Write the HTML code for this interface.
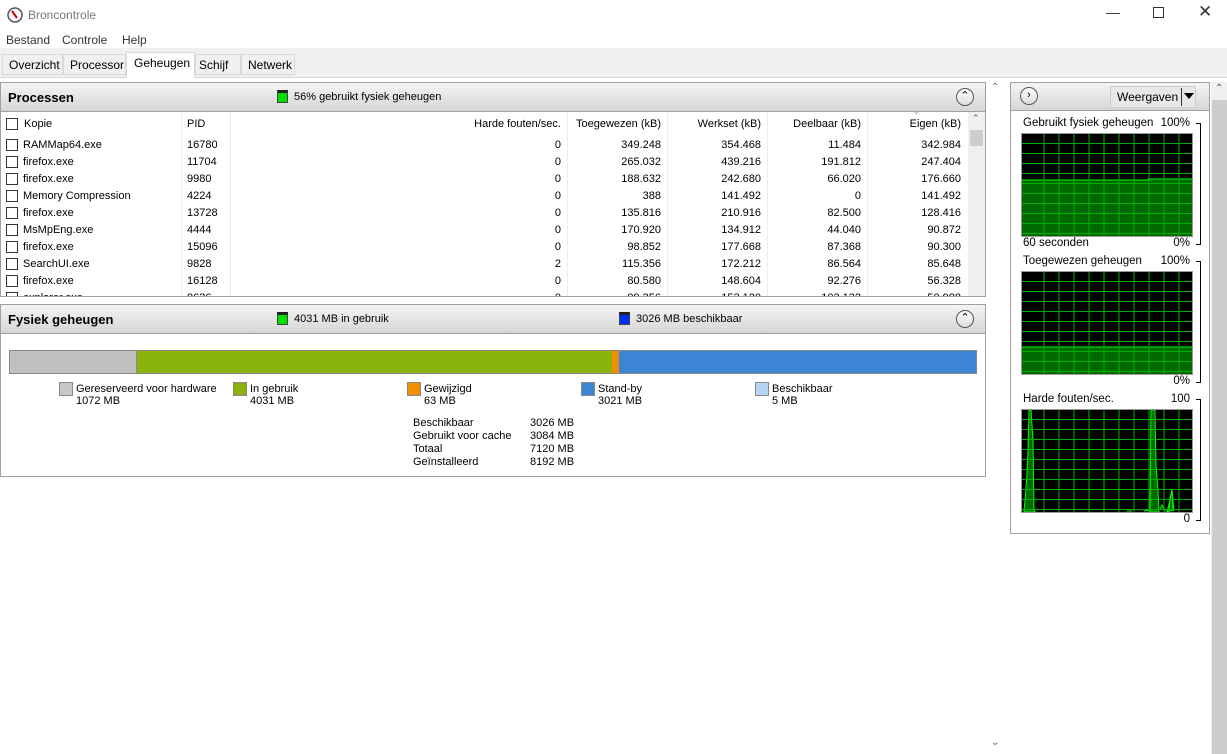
<!DOCTYPE html>
<html><head><meta charset="utf-8"><style>
*{margin:0;padding:0;box-sizing:border-box}
body{width:1227px;height:754px;background:#fff;font-family:"Liberation Sans",sans-serif;font-size:11px;color:#000;position:relative;overflow:hidden}
.a{position:absolute;white-space:nowrap}
.hdr{position:absolute;background:linear-gradient(#f4f4f4,#d6d6d6);border:1px solid #a0a0a0;}
.hdr b{position:absolute;left:7px;font-size:13px}
.cb{position:absolute;width:12px;height:12px;border:1px solid #333;background:#fff}
.r{text-align:right}
.col{position:absolute;top:112px;height:184px;border-left:1px solid #e8eef6}
.circ{position:absolute;width:18px;height:18px;border:1px solid #555;border-radius:50%;background:linear-gradient(#fff,#ddd);font-size:11px;text-align:center;line-height:15px}
.sw{position:absolute;width:14px;height:14px;border:1px solid #888}
</style></head><body>
<svg class="a" style="left:7px;top:7px" width="16" height="16"><circle cx="8" cy="8" r="7" fill="#fff" stroke="#555" stroke-width="1.5"/><path d="M5 4 L10 11" stroke="#c00" stroke-width="2"/></svg>
<div class="a" style="left:28px;top:8px;font-size:12px;color:#777">Broncontrole</div>
<div class="a" style="left:1106px;top:4px;font-size:14px;color:#333">&#8212;</div>
<div class="a" style="left:1153px;top:7px;width:11px;height:11px;border:1px solid #333"></div>
<div class="a" style="left:1198px;top:2px;font-size:17px;color:#333">&#10005;</div>
<div class="a" style="left:6px;top:33px;font-size:12px;color:#333">Bestand</div>
<div class="a" style="left:62px;top:33px;font-size:12px;color:#333">Controle</div>
<div class="a" style="left:122px;top:33px;font-size:12px;color:#333">Help</div>
<div class="a" style="left:0;top:48px;width:1227px;height:30px;background:#f0f0f0;border-bottom:1px solid #d9d9d9"></div>
<div class="a" style="left:2px;top:54px;width:61px;height:21px;border:1px solid #d9d9d9;font-size:12px;padding:3px 0 0 6px">Overzicht</div>
<div class="a" style="left:63px;top:54px;width:63px;height:21px;border:1px solid #d9d9d9;font-size:12px;padding:3px 0 0 6px">Processor</div>
<div class="a" style="left:126px;top:52px;width:69px;height:26px;border:1px solid #d9d9d9;border-bottom:none;background:#fff;font-size:12px;padding:3px 0 0 7px">Geheugen</div>
<div class="a" style="left:195px;top:54px;width:46px;height:21px;border:1px solid #d9d9d9;font-size:12px;padding:3px 0 0 3px">Schijf</div>
<div class="a" style="left:241px;top:54px;width:54px;height:21px;border:1px solid #d9d9d9;font-size:12px;padding:3px 0 0 6px">Netwerk</div>
<div class="a" style="left:0;top:82px;width:986px;height:215px;border:1px solid #a0a0a0"></div>
<div class="hdr" style="left:0;top:82px;width:986px;height:30px"><b style="top:7px">Processen</b></div>
<div class="a" style="left:277px;top:90px;width:11px;height:13px;background:#00e000;border:1px solid #444;border-top:3px solid #222"></div>
<div class="a" style="left:294px;top:91px">56% gebruikt fysiek geheugen</div>
<div class="circ" style="left:956px;top:88px">&#8963;</div>
<div class="col" style="left:181px"></div><div class="col" style="left:230px"></div><div class="col" style="left:567px"></div><div class="col" style="left:667px"></div><div class="col" style="left:767px"></div><div class="col" style="left:867px"></div>
<div class="cb" style="left:6px;top:118px"></div><div class="a" style="left:24px;top:118px">Kopie</div>
<div class="a" style="left:187px;top:118px">PID</div>
<div class="a r" style="left:230px;width:331px;top:118px">Harde fouten/sec.</div>
<div class="a r" style="left:567px;width:94px;top:118px">Toegewezen (kB)</div>
<div class="a r" style="left:667px;width:94px;top:118px">Werkset (kB)</div>
<div class="a r" style="left:767px;width:94px;top:118px">Deelbaar (kB)</div>
<div class="a r" style="left:867px;width:94px;top:118px">Eigen (kB)</div>
<div class="a" style="left:913px;top:107px;font-size:8px;color:#999">&#8964;</div>
<div class="a" style="left:968px;top:112px;width:17px;height:184px;background:#f0f0f0"></div>
<div class="a" style="left:970px;top:130px;width:13px;height:16px;background:#cdcdcd"></div>
<div class="a" style="left:972px;top:113px;font-size:9px;color:#555">&#8963;</div>
<div id="rows" class="a" style="left:0;top:138px;width:968px;height:158px;overflow:hidden"></div>
<div class="a" style="left:0;top:304px;width:986px;height:173px;border:1px solid #a0a0a0"></div>
<div class="hdr" style="left:0;top:304px;width:986px;height:30px"><b style="top:7px">Fysiek geheugen</b></div>
<div class="a" style="left:277px;top:312px;width:11px;height:13px;background:#00e000;border:1px solid #444;border-top:3px solid #222"></div>
<div class="a" style="left:294px;top:313px">4031 MB in gebruik</div>
<div class="a" style="left:619px;top:312px;width:11px;height:13px;background:#0030ff;border:1px solid #444;border-top:3px solid #222"></div>
<div class="a" style="left:636px;top:313px">3026 MB beschikbaar</div>
<div class="circ" style="left:956px;top:310px">&#8963;</div>
<div class="a" style="left:9px;top:350px;width:968px;height:24px;border:1px solid #888;display:flex">
<div style="width:127px;background:#c0c0c0;border-right:1px solid #888"></div>
<div style="width:475px;background:#8ab40c"></div>
<div style="width:7px;background:#f09000"></div>
<div style="flex:1;background:#3c84d4"></div></div>
<div class="sw" style="left:59px;top:382px;background:#c8c8c8"></div><div class="a" style="left:76px;top:383px">Gereserveerd voor hardware<br>1072 MB</div>
<div class="sw" style="left:233px;top:382px;background:#8ab40c"></div><div class="a" style="left:250px;top:383px">In gebruik<br>4031 MB</div>
<div class="sw" style="left:407px;top:382px;background:#f09000"></div><div class="a" style="left:424px;top:383px">Gewijzigd<br>63 MB</div>
<div class="sw" style="left:581px;top:382px;background:#3c84d4"></div><div class="a" style="left:598px;top:383px">Stand-by<br>3021 MB</div>
<div class="sw" style="left:755px;top:382px;background:#b8d4f4"></div><div class="a" style="left:772px;top:383px">Beschikbaar<br>5 MB</div>
<div class="a" style="left:413px;top:417px;line-height:13px">Beschikbaar<br>Gebruikt voor cache<br>Totaal<br>Geïnstalleerd</div>
<div class="a" style="left:530px;top:417px;line-height:13px">3026 MB<br>3084 MB<br>7120 MB<br>8192 MB</div>
<div class="a" style="left:991px;top:82px;font-size:10px;color:#666">&#8963;</div>
<div class="a" style="left:991px;top:737px;font-size:10px;color:#666">&#8964;</div>
<div class="a" style="left:1211px;top:82px;width:16px;height:672px;background:#f0f0f0"></div>
<div class="a" style="left:1212px;top:100px;width:15px;height:654px;background:#cdcdcd"></div>
<div class="a" style="left:1215px;top:83px;font-size:10px;color:#555">&#8963;</div>
<div class="a" style="left:1010px;top:82px;width:200px;height:452px;border:1px solid #a0a0a0"></div>
<div class="hdr" style="left:1010px;top:82px;width:200px;height:29px"></div>
<div class="circ" style="left:1020px;top:87px">&#8250;</div>
<div class="a" style="left:1110px;top:86px;width:86px;height:22px;background:#e8e8e8;border:1px solid #ccc;font-size:12px;padding:3px 0 0 6px">Weergaven</div>
<div class="a" style="left:1181px;top:88px;width:1px;height:18px;background:#333"></div>
<div class="a" style="left:1184px;top:93px;width:0;height:0;border-left:5px solid transparent;border-right:5px solid transparent;border-top:6px solid #000"></div>
<div id="graphs"></div>
<script>
var rows=[["RAMMap64.exe","16780","0","349.248","354.468","11.484","342.984"],["firefox.exe","11704","0","265.032","439.216","191.812","247.404"],["firefox.exe","9980","0","188.632","242.680","66.020","176.660"],["Memory Compression","4224","0","388","141.492","0","141.492"],["firefox.exe","13728","0","135.816","210.916","82.500","128.416"],["MsMpEng.exe","4444","0","170.920","134.912","44.040","90.872"],["firefox.exe","15096","0","98.852","177.668","87.368","90.300"],["SearchUI.exe","9828","2","115.356","172.212","86.564","85.648"],["firefox.exe","16128","0","80.580","148.604","92.276","56.328"],["explorer.exe","8636","0","99.356","153.120","102.132","50.988"]];
var h="",cols=[[230,331],[567,94],[667,94],[767,94],[867,94]];
rows.forEach(function(r,i){var t=i*17;h+='<div class="cb" style="left:6px;top:'+(t+1)+'px"></div><div class="a" style="left:23px;top:'+(t+1)+'px">'+r[0]+'</div><div class="a" style="left:187px;top:'+(t+1)+'px">'+r[1]+'</div>';
for(var k=0;k<5;k++)h+='<div class="a r" style="left:'+cols[k][0]+'px;width:'+cols[k][1]+'px;top:'+(t+1)+'px">'+r[k+2]+'</div>';});
document.getElementById('rows').innerHTML=h;
function grid(){var s="";for(var x=22;x<170;x+=15)s+='<line x1="'+x+'" y1="0" x2="'+x+'" y2="102" stroke="#00b000"/>';for(var y=9.5;y<102;y+=10)s+='<line x1="0" y1="'+y+'" x2="170" y2="'+y+'" stroke="#00b000"/>';return s;}
function g(top,l1,r1,l2,r2,inner,bot){return '<div class="a" style="left:1023px;top:'+(top-16)+'px;font-size:11.5px">'+l1+'</div><div class="a r" style="left:1120px;width:70px;top:'+(top-16)+'px;font-size:11.5px">'+r1+'</div>'+(l2?'<div class="a" style="left:1023px;top:'+(top+104)+'px;font-size:11.5px">'+l2+'</div>':'')+'<div class="a r" style="left:1120px;width:70px;top:'+(top+104)+'px;font-size:11.5px">'+r2+'</div><svg class="a" style="left:1021px;top:'+top+'px;border:1px solid #999" width="172" height="104"><rect width="172" height="104" fill="#000"/>'+inner+grid()+'</svg><div class="a" style="left:1196px;top:'+(top-10)+'px;width:5px;height:'+(bot)+'px;border:1px solid #000;border-left:none"></div>';}
var H='';
H+=g(133,"Gebruikt fysiek geheugen","100%","60 seconden","0%",'<path d="M0 46 H126 V45 H172 V104 H0Z" fill="#006a00"/><path d="M0 46 H126 V45 H172" stroke="#00ff00" fill="none"/>',122);
H+=g(271,"Toegewezen geheugen","100%","","0%",'<path d="M0 75 H172 V104 H0Z" fill="#006a00"/><path d="M0 75 H172" stroke="#00ff00" fill="none"/>',122);
H+=g(409,"Harde fouten/sec.","100","","0",'<path d="M2 102 L3 90 L5 65 L6 40 L7 0 L9 0 L10 15 L11 30 L12 100 L13 102 Z M128 102 L129 0 L133 0 L134 55 L136 80 L137 102 Z M145 102 L148 90 L150 80 L151 100 Z" fill="#006a00" stroke="#00ff00"/><path d="M105 101 H110 M122 101 L128 100 M138 100 L140 95 L142 100 L147 100 L148 88 L150 80 L152 101" stroke="#00ff00" fill="none"/>',122);
document.getElementById('graphs').innerHTML=H;
</script>
</body></html>
